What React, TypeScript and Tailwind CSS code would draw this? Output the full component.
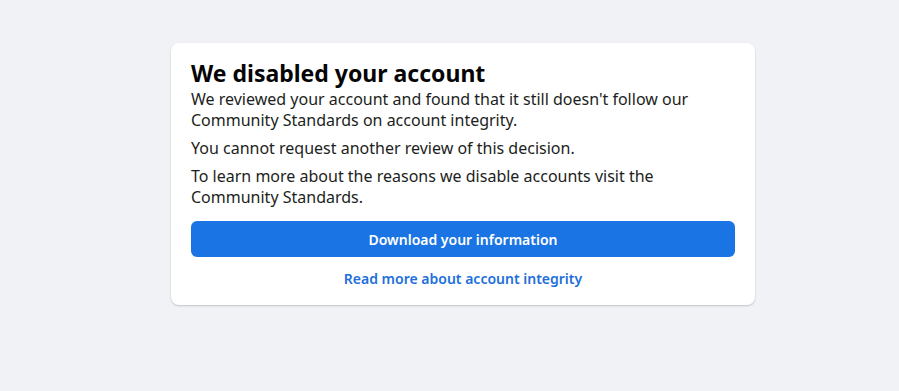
export default function App() {
  return (
    <div className="min-h-[391px] w-full bg-[#f0f2f5] pt-[43px]" style={{ fontFamily: '"Noto Sans", "Open Sans", Arial, sans-serif' }}>
      <div className="ml-[171px] w-[584px] rounded-lg bg-white px-5 pt-[15px] pb-[16px] shadow-[0_1px_2px_rgba(0,0,0,0.2)]">
        <h1 className="text-[23px] font-bold leading-[30px] text-[#050505]">We disabled your account</h1>
        <p className="mt-[1px] text-[16px] leading-[21px] text-[#1c1e21]">We reviewed your account and found that it still doesn't follow our Community Standards on account integrity.</p>
        <p className="mt-[7px] text-[16px] leading-[21px] text-[#1c1e21]">You cannot request another review of this decision.</p>
        <p className="mt-[7px] text-[16px] leading-[21px] text-[#1c1e21]">To learn more about the reasons we disable accounts visit the Community Standards.</p>
        <button className="mt-[13px] flex h-9 w-full items-center justify-center rounded-md bg-[#1b74e4] text-[14px] font-semibold text-white">Download your information</button>
        <div className="mt-[12px] text-center text-[14px] font-semibold leading-5 text-[#216fdb]">Read more about account integrity</div>
      </div>
    </div>
  );
}
